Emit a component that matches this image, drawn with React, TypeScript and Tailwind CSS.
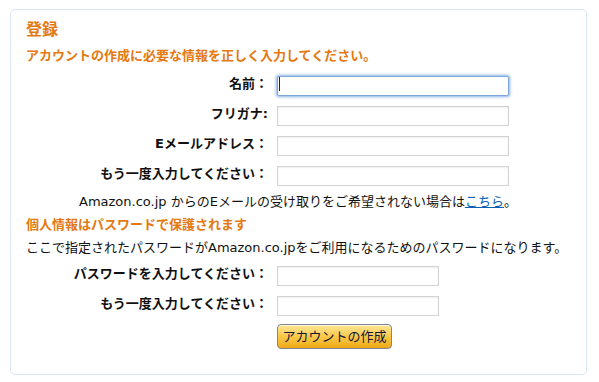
import React from "react";

const font = "font-['DejaVu_Sans','Noto_Sans_CJK_JP',sans-serif]";

function Field({
  label,
  width,
  focused = false,
  type = "text",
}: {
  label: string;
  width: string;
  focused?: boolean;
  type?: string;
}) {
  return (
    <div className="flex h-[20px] items-center">
      <label className="w-[251px] shrink-0 pr-[9px] text-right text-[13px] font-bold leading-[20px] text-[#111]">
        {label}
      </label>
      <div className={`relative h-[20px] ${width}`}>
        <input
          type={type}
          className={
            focused
              ? "h-full w-full rounded-[2px] border border-[#7ea6d9] bg-white shadow-[0_0_3px_1px_rgba(96,150,220,0.75)] outline-none"
              : "h-full w-full border border-[#d3d3d3] bg-white shadow-[inset_0_1px_2px_rgba(0,0,0,0.07)] outline-none"
          }
        />
        {focused && (
          <span className="pointer-events-none absolute left-[2px] top-[3px] h-[14px] w-px bg-[#222]" />
        )}
      </div>
    </div>
  );
}

export default function App() {
  return (
    <div className={`min-h-[382px] w-[599px] bg-white pl-[10px] pt-[9px] ${font}`}>
      <div className="h-[366px] w-[577px] rounded-[5px] border border-[#d9e6f5] px-[15px] pt-[10px]">
        <h1 className="h-[20px] text-[16px] font-bold leading-[20px] text-[#e47911]">登録</h1>
        <p className="mt-[7px] text-[13px] font-bold leading-[18px] text-[#e47911]">
          アカウントの作成に必要な情報を正しく入力してください。
        </p>

        <div className="mt-[9px] flex flex-col gap-[10px]">
          <Field label="名前：" width="w-[232px]" focused />
          <Field label="フリガナ:" width="w-[232px]" />
          <Field label="Eメールアドレス：" width="w-[232px]" />
          <Field label="もう一度入力してください：" width="w-[232px]" />
        </div>

        <p className="mt-[9px] whitespace-nowrap pl-[53px] text-[13px] leading-[18px] text-[#111]">
          Amazon.co.jp からのEメールの受け取りをご希望されない場合は
          <a href="#" className="text-[#0a5fb4] underline">
            こちら
          </a>
          。
        </p>

        <h2 className="mt-[5px] text-[13px] font-bold leading-[18px] text-[#e47911]">
          個人情報はパスワードで保護されます
        </h2>
        <p className="mt-[5px] text-[13px] leading-[18px] text-[#111]">
          ここで指定されたパスワードがAmazon.co.jpをご利用になるためのパスワードになります。
        </p>

        <div className="mt-[7px] flex flex-col gap-[10px]">
          <Field label="パスワードを入力してください：" width="w-[162px]" type="password" />
          <Field label="もう一度入力してください：" width="w-[162px]" type="password" />
        </div>

        <div className="mt-[10px] pl-[251px]">
          <button className="h-[25px] w-[115px] rounded-[4px] border border-[#7f849a] bg-gradient-to-b from-[#fde795] via-[#f8c948] to-[#eea90c] text-[13px] leading-[23px] text-[#15153a] shadow-[inset_0_1px_0_rgba(255,255,255,0.6)]">
            アカウントの作成
          </button>
        </div>
      </div>
    </div>
  );
}
